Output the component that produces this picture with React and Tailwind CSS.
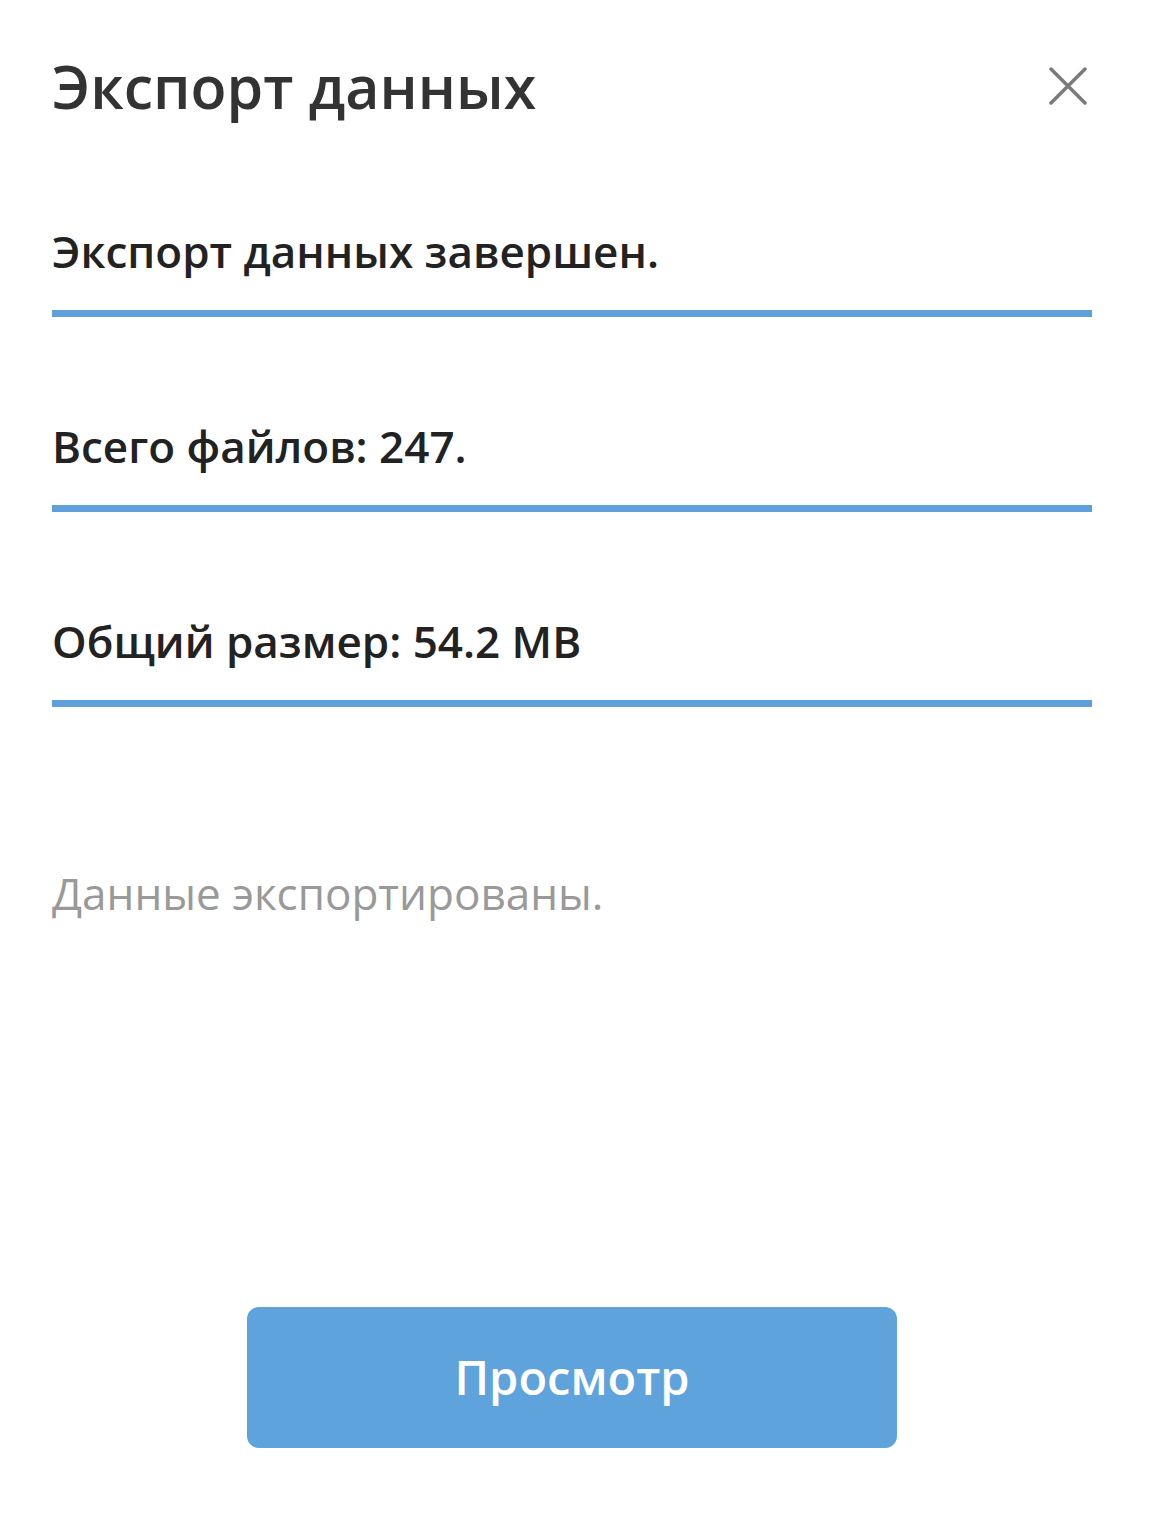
import React from 'react';

const rows = ['Экспорт данных завершен.', 'Всего файлов: 247.', 'Общий размер: 54.2 MB'];

export default function App() {
  return (
    <div className="w-[1154px] h-[1536px] bg-white pl-[52px] pr-[62px] flex flex-col" style={{ fontFamily: '"Open Sans", "Noto Sans", sans-serif' }}>
      {/* header */}
      <div className="flex items-center justify-between h-[180px] pb-[8px]">
        <h1 className="text-[59px] font-semibold text-[#333333] leading-none">Экспорт данных</h1>
        <button className="w-[48px] h-[48px] flex items-center justify-center">
          <svg width="38" height="38" viewBox="0 0 38 38" fill="none" stroke="#7a7a7a" strokeWidth="3.5" strokeLinecap="round">
            <path d="M2 2 L36 36 M36 2 L2 36" />
          </svg>
        </button>
      </div>

      {rows.map((r) => (
        <div key={r} className="h-[195px] flex flex-col">
          <div className="flex-1 flex items-center pt-[12px]">
            <span className="text-[44px] font-semibold text-[#222222] leading-none">{r}</span>
          </div>
          <div className="h-[7px] bg-[#5fa0dc] mb-[58px]" />
        </div>
      ))}

      <p className="mt-[106px] text-[44px] text-[#999999] leading-none">Данные экспортированы.</p>

      <div className="flex justify-center mt-auto mb-[88px]">
        <button className="w-[650px] h-[141px] rounded-[12px] bg-[#5fa3dd] text-white text-[47px] font-semibold">
          Просмотр
        </button>
      </div>
    </div>
  );
}
